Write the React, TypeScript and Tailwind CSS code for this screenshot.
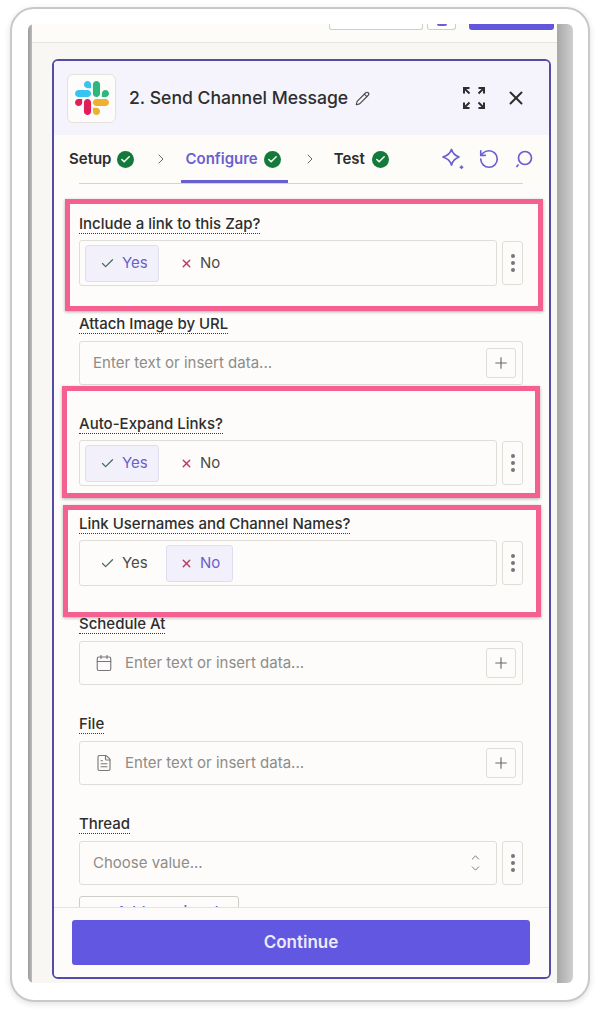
import { Calendar, Check, ChevronDown, ChevronRight, ChevronUp, FileText, Pencil, Plus, RotateCcw, X } from 'lucide-react'

const font = { fontFamily: 'Inter, "Liberation Sans", sans-serif' }

function SlackLogo() {
  return (
    <svg viewBox="0 0 122.8 122.8" className="w-[34px] h-[34px]">
      <path fill="#E01E5A" d="M25.8 77.6c0 7.1-5.8 12.9-12.9 12.9S0 84.7 0 77.6s5.8-12.9 12.9-12.9h12.9v12.9z" />
      <path fill="#E01E5A" d="M32.3 77.6c0-7.1 5.8-12.9 12.9-12.9s12.9 5.8 12.9 12.9v32.3c0 7.1-5.8 12.9-12.9 12.9s-12.9-5.8-12.9-12.9V77.6z" />
      <path fill="#36C5F0" d="M45.2 25.8c-7.1 0-12.9-5.8-12.9-12.9S38.1 0 45.2 0s12.9 5.8 12.9 12.9v12.9H45.2z" />
      <path fill="#36C5F0" d="M45.2 32.3c7.1 0 12.9 5.8 12.9 12.9s-5.8 12.9-12.9 12.9H12.9C5.8 58.1 0 52.3 0 45.2s5.8-12.9 12.9-12.9h32.3z" />
      <path fill="#2EB67D" d="M97 45.2c0-7.1 5.8-12.9 12.9-12.9s12.9 5.8 12.9 12.9-5.8 12.9-12.9 12.9H97V45.2z" />
      <path fill="#2EB67D" d="M90.5 45.2c0 7.1-5.8 12.9-12.9 12.9s-12.9-5.8-12.9-12.9V12.9C64.7 5.8 70.5 0 77.6 0s12.9 5.8 12.9 12.9v32.3z" />
      <path fill="#ECB22E" d="M77.6 97c7.1 0 12.9 5.8 12.9 12.9s-5.8 12.9-12.9 12.9-12.9-5.8-12.9-12.9V97h12.9z" />
      <path fill="#ECB22E" d="M77.6 90.5c-7.1 0-12.9-5.8-12.9-12.9s5.8-12.9 12.9-12.9h32.3c7.1 0 12.9 5.8 12.9 12.9s-5.8 12.9-12.9 12.9H77.6z" />
    </svg>
  )
}

function ExpandIcon() {
  return (
    <svg viewBox="0 0 22 22" className="w-[22px] h-[22px]" fill="none" stroke="#2d2e2e" strokeWidth="2">
      <path d="M1 6.500V1h5.500M1.500 1.500l5 5" />
      <path d="M21 6.500V1h-5.500M20.500 1.500l-5 5" />
      <path d="M1 15.500V21h5.500M1.500 20.500l5-5" />
      <path d="M21 15.500V21h-5.500M20.500 20.500l-5-5" />
    </svg>
  )
}

function SparkleIcon() {
  return (
    <svg viewBox="0 0 24 24" className="w-[24px] h-[24px]" fill="none" stroke="#6a5fd0" strokeWidth="1.8" strokeLinejoin="round">
      <path d="M10.500 2.500c1.200 3.600 3.700 6.100 7.500 7.500-3.800 1.400-6.300 3.900-7.500 8-1.200-4.100-4-6.600-8.500-8 4.500-1.400 7.300-3.900 8.500-7.500z" />
      <path d="M20.500 18.500v3.500M18.700 20.200h3.600" strokeWidth="1.600" />
    </svg>
  )
}

function SearchBubbleIcon() {
  return (
    <svg viewBox="0 0 20 20" className="w-[20px] h-[20px]" fill="none" stroke="#6a5fd0" strokeWidth="1.7">
      <circle cx="11" cy="9" r="6.500" />
      <path d="M2.500 18l2-2.500" />
    </svg>
  )
}

function GreenCheck() {
  return (
    <span className="w-[17px] h-[17px] rounded-full bg-[#137a3c] flex items-center justify-center shrink-0">
      <Check size={11} strokeWidth={3.5} className="text-[#f4fbf3]" />
    </span>
  )
}

function Kebab({ className }: { className: string }) {
  return (
    <div className={`w-[21px] ml-[5px] rounded-[3px] border border-[#dfddd8] bg-[#fdfcfa] flex flex-col items-center justify-center gap-[3px] ${className}`}>
      <span className="w-1 h-1 rounded-full bg-[#77767a]" />
      <span className="w-1 h-1 rounded-full bg-[#77767a]" />
      <span className="w-1 h-1 rounded-full bg-[#77767a]" />
    </div>
  )
}

function Label({ text }: { text: string }) {
  return (
    <div className="h-[25px]">
      <div className="w-fit text-[15px] leading-[18px] font-medium text-[#2d2e2e] border-b border-dotted border-[#3c3c3c]">{text}</div>
    </div>
  )
}

function ToggleField({ label, value }: { label: string; value: 'yes' | 'no' }) {
  const yes = value === 'yes'
  return (
    <div className="h-[100px]">
      <Label text={label} />
      <div className="flex">
        <div className="w-[418px] h-[46px] rounded-[3px] border border-[#dfddd8] bg-[#fdfcfa] flex items-center pl-[5px] gap-[7px] text-[15px]">
          <div className={`w-[74px] h-[37px] rounded-[3px] border flex items-center pl-[14px] gap-[7px] ${yes ? 'bg-[#f2f1fb] border-[#dfdeef] text-[#6b60c8]' : 'border-transparent text-[#4b4a48]'}`}>
            <Check size={15} strokeWidth={2} className="text-[#3f6f58]" />
            Yes
          </div>
          <div className={`w-[67px] h-[37px] rounded-[3px] border flex items-center pl-[13px] gap-[7px] ${yes ? 'border-transparent text-[#4b4a48]' : 'bg-[#f2f1fb] border-[#dfdeef] text-[#6b60c8]'}`}>
            <X size={13} strokeWidth={2.5} className="text-[#b93a5e]" />
            No
          </div>
        </div>
        <Kebab className="h-[44px] mt-px" />
      </div>
    </div>
  )
}

function TextField({ label, icon }: { label: string; icon?: 'calendar' | 'file' }) {
  return (
    <div className="h-[100px]">
      <Label text={label} />
      <div className="mt-px h-[44px] rounded-[3px] border border-[#dfddd8] bg-[#fdfcfa] flex items-center pl-[13px] pr-[6px] text-[15px] text-[#8e8c88]">
        {icon === 'calendar' && <Calendar size={18} strokeWidth={1.5} className="mr-[12px] ml-[2px] text-[#77767a]" />}
        {icon === 'file' && <FileText size={18} strokeWidth={1.5} className="mr-[12px] ml-[2px] text-[#77767a]" />}
        <span>Enter text or insert data...</span>
        <div className="ml-auto w-[30px] h-[30px] rounded-[3px] border border-[#dfddd8] flex items-center justify-center">
          <Plus size={18} strokeWidth={1.5} className="text-[#66656a]" />
        </div>
      </div>
    </div>
  )
}

function PinkBox({ className }: { className: string }) {
  return <div className={`absolute h-[112px] w-[478px] border-[5px] border-[#f4608f] shadow-[0_1px_3px_rgba(0,0,0,0.3)] ${className}`} />
}

export default function App() {
  return (
    <div className="relative w-[600px] h-[1016px] bg-white pl-[10px] pt-[7px] overflow-hidden" style={font}>
      <div className="w-[580px] h-[995px] rounded-[24px] border-2 border-[#c9c9c9] bg-white pl-[16px] pt-[15px] shadow-[0_2px_6px_rgba(0,0,0,0.12)]">
        <div className="w-[545px] h-[959px] flex overflow-hidden rounded-b-[6px] rounded-t-[6px]">
          <div className="w-[4px] bg-gradient-to-r from-[#9a9a9a] to-[#bcbcbc]" />

          <div className="w-[525px] bg-[#f8f7f3]">
            {/* top bar, cut off by the picture */}
            <div className="h-[19px] border-b border-[#e6e4df] bg-[#fdfcf8] flex justify-end pr-[3px]">
              <div className="w-[94px] h-[6px] rounded-b-[3px] border border-t-0 border-[#cfcdc8] bg-white" />
              <div className="w-[29px] h-[6px] ml-[4px] rounded-b-[3px] border border-t-0 border-[#cfcdc8] bg-white flex justify-center">
                <span className="w-[10px] h-[2px] rounded-b-full bg-[#6a5fd0]" />
              </div>
              <div className="w-[85px] h-[6px] ml-[13px] rounded-b-[3px] bg-[#6257db]" />
            </div>

            {/* zap step panel */}
            <div className="ml-[20px] mt-[16px] w-[499px] h-[920px] rounded-[6px] border-2 border-[#544aa8] bg-[#fdfcfa] flex flex-col overflow-hidden">
              <div className="h-[74px] shrink-0 bg-[#f5f4fc] flex items-center pl-[13px]">
                <div className="w-[49px] h-[49px] rounded-[6px] border border-[#e4e2dd] bg-[#fdfcfa] flex items-center justify-center">
                  <SlackLogo />
                </div>
                <span className="ml-[13px] text-[17.6px] font-medium text-[#2d2e2e]">2. Send Channel Message</span>
                <Pencil size={15} strokeWidth={1.8} className="ml-[7px] text-[#4b4a48]" />
                <div className="ml-auto mr-[22px] flex items-center gap-[20px]">
                  <ExpandIcon />
                  <X size={22} strokeWidth={2.2} className="text-[#2d2e2e]" />
                </div>
              </div>

              <div className="h-[48px] shrink-0 flex items-center pl-[15px] text-[15px] font-semibold text-[#2d2e2e] bg-[#fdfcf8]">
                <span>Setup</span>
                <span className="ml-[6px]"><GreenCheck /></span>
                <ChevronRight size={16} strokeWidth={1.5} className="ml-[19px] text-[#66656a]" />
                <div className="ml-[12px] h-full pl-[4px] pr-[7px] flex items-center gap-[6px] border-b-[3px] border-[#6a5fd0] pt-[3px] text-[#6a5fd0]">
                  <span>Configure</span>
                  <GreenCheck />
                </div>
                <ChevronRight size={16} strokeWidth={1.5} className="ml-[14px] text-[#66656a]" />
                <span className="ml-[16px]">Test</span>
                <span className="ml-[7px]"><GreenCheck /></span>
                <div className="ml-auto mr-[15px] flex items-center">
                  <SparkleIcon />
                  <RotateCcw size={22} strokeWidth={1.8} className="ml-[13px] text-[#6a5fd0]" />
                  <span className="ml-[14px]"><SearchBubbleIcon /></span>
                </div>
              </div>

              <div className="flex-1 overflow-hidden pl-[25px] pr-[26px]">
                <div className="h-px bg-[#d6d4d0]" />
                <div className="pt-[31px]">
                  <ToggleField label="Include a link to this Zap?" value="yes" />
                  <TextField label="Attach Image by URL" />
                  <ToggleField label="Auto-Expand Links?" value="yes" />
                  <ToggleField label="Link Usernames and Channel Names?" value="no" />
                  <TextField label="Schedule At" icon="calendar" />
                  <TextField label="File" icon="file" />
                  <div className="h-[81px]">
                    <Label text="Thread" />
                    <div className="flex mt-px">
                      <div className="w-[418px] h-[44px] rounded-[3px] border border-[#dfddd8] bg-[#fdfcfa] flex items-center pl-[13px] pr-[14px] text-[15px] text-[#8e8c88]">
                        <span>Choose value...</span>
                        <div className="ml-auto flex flex-col items-center text-[#66656a]">
                          <ChevronUp size={13} strokeWidth={1.6} className="-mb-[2px]" />
                          <ChevronDown size={13} strokeWidth={1.6} />
                        </div>
                      </div>
                      <Kebab className="h-[44px]" />
                    </div>
                  </div>
                  <div className="w-[160px] h-[32px] rounded-[3px] border border-[#cfcdc8] flex items-center justify-center gap-1 text-[15px] font-medium text-[#6a5fd0]">
                    <Plus size={14} />
                    Add new input
                  </div>
                </div>
              </div>

              <div className="h-[70px] shrink-0 border-t border-[#e6e4df] bg-[#fdfcfa] pl-[18px] pt-[12px]">
                <button className="w-[458px] h-[45px] rounded-[3px] bg-[#6257e0] text-[17px] font-semibold text-[#ecebfb]">Continue</button>
              </div>
            </div>
          </div>

          <div className="w-[16px] bg-gradient-to-r from-[#a8a8a8] to-[#cfcfcf]" />
        </div>
      </div>

      <PinkBox className="left-[65px] top-[199px]" />
      <PinkBox className="left-[62px] top-[386px]" />
      <PinkBox className="left-[63px] top-[505px]" />
    </div>
  )
}
